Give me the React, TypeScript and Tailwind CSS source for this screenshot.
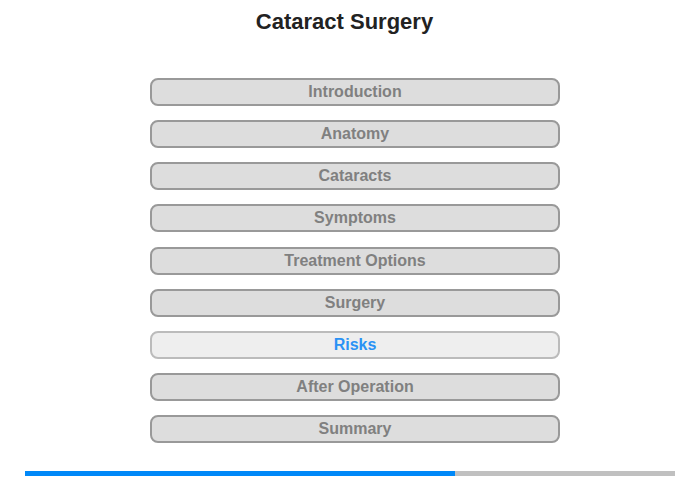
const sections = [
  "Introduction",
  "Anatomy",
  "Cataracts",
  "Symptoms",
  "Treatment Options",
  "Surgery",
  "Risks",
  "After Operation",
  "Summary",
];

const active = "Risks";
const progress = 66.2;

export default function App() {
  return (
    <div className="w-[700px] h-[480px] bg-white font-['Liberation_Sans',Arial,sans-serif] overflow-hidden">
      <h1 className="pt-[10px] pr-[11px] text-center text-[22px] leading-[24px] font-bold text-[#222]">
        Cataract Surgery
      </h1>
      <div className="mt-[44px] ml-[150px] w-[410px] flex flex-col gap-[14.125px]">
        {sections.map((s) => {
          const isActive = s === active;
          return (
            <div
              key={s}
              className={
                isActive
                  ? "h-[28px] rounded-[8px] border-2 border-[#bbbbbb] bg-[#eeeeee] text-[#2a92f5] text-center text-[16px] leading-[24px] font-bold"
                  : "h-[28px] rounded-[8px] border-2 border-[#999999] bg-[#dddddd] text-[#808080] text-center text-[16px] leading-[24px] font-bold"
              }
            >
              {s}
            </div>
          );
        })}
      </div>
      <div className="mt-[28px] mx-[25px] h-[5px] bg-[#c0c0c0]">
        <div className="h-full bg-[#0088f8]" style={{ width: `${progress}%` }} />
      </div>
    </div>
  );
}
